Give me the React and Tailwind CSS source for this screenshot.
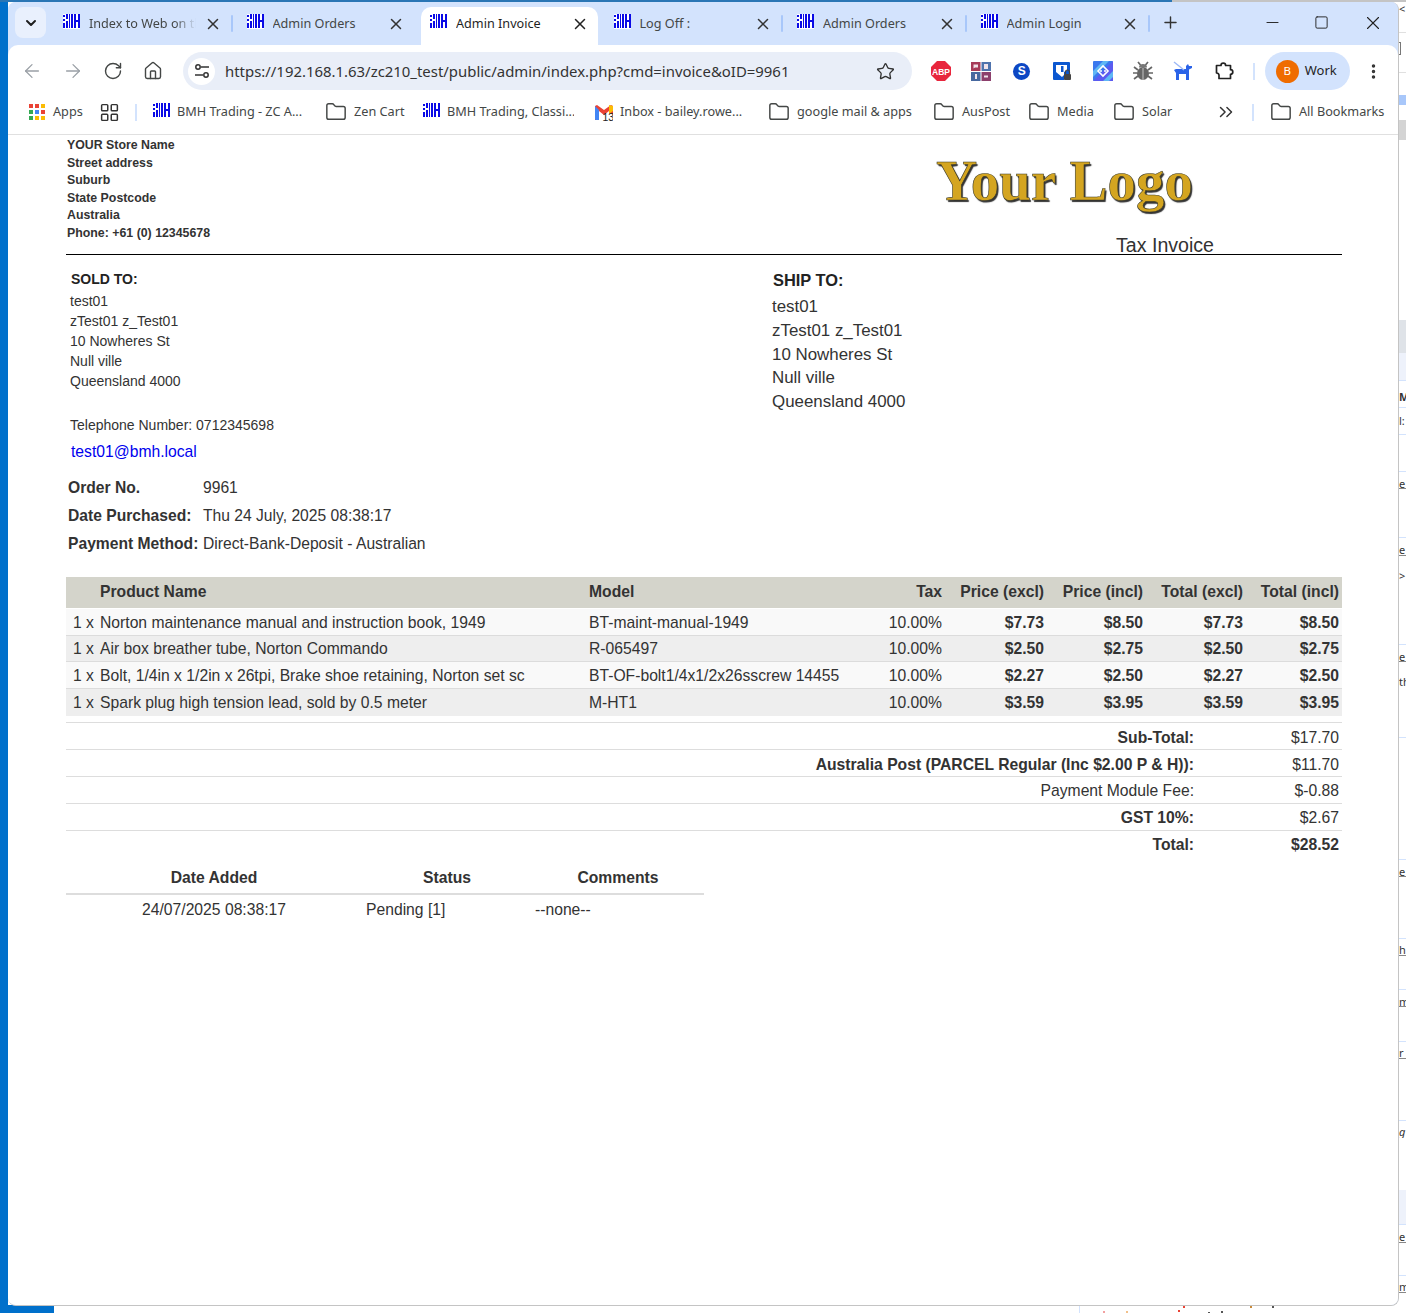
import React from "react";
import { ArrowLeft, ArrowRight, RotateCw, Home, Star, MoreVertical, ChevronDown, ChevronsRight, X, Plus, Minus, Square, Folder, LayoutGrid } from "lucide-react";

const ui = "font-['Noto_Sans','Open_Sans',sans-serif]";

// the barcode-ish favicon used on all the BMH tabs
const Favicon = ({ className = "" }) => (
  <svg width="17" height="15" viewBox="0 0 17 15" className={className}>
    <rect width="17" height="15" fill="#fff" />
    <path d="M0 1h2v2H0zM0 5h2v2H0zM0 9h2v5H0zM3 0h2v5H3zM3 7h2v7H3zM6 0h1v14H6zM8 0h2v14H8zM11 0h2v14h-2zM15 0h2v14h-2z" fill="#0a0ae6" />
    <path d="M13 6h2v2h-2z" fill="#0a0ae6" />
  </svg>
);

const Tab = ({ title, fade, sep = true }) => (
  <div className="relative flex items-center w-[183.5px] h-[38px] pl-[14px] pr-[11px] pb-[5px] shrink-0 text-[#444746]">
    <Favicon className="shrink-0 -mt-[5px]" />
    <span
      className={`ml-[9px] flex-1 text-[12.65px] whitespace-nowrap overflow-hidden ${
        fade ? "mr-[8px] [mask-image:linear-gradient(to_right,#000_80%,transparent)]" : ""
      }`}
    >
      {title}
    </span>
    <X size={18} strokeWidth={2} className="shrink-0 text-[#333]" />
    {sep && <div className="absolute right-0 top-[8px] w-[2px] h-[17px] rounded-sm bg-[#a8c7fa]" />}
  </div>
);

const ActiveTab = ({ title }) => (
  <div className="flex items-center w-[177.5px] h-[38px] ml-[4.5px] mr-[1.5px] pl-[9.5px] pr-[9.5px] pb-[5px] shrink-0 bg-white rounded-t-[10px] text-[#1f1f1f]">
    <Favicon className="shrink-0 -mt-[5px]" />
    <span className="ml-[9px] flex-1 text-[12.65px] whitespace-nowrap overflow-hidden">{title}</span>
    <X size={18} strokeWidth={2} className="shrink-0 text-[#222]" />
  </div>
);

const TabStrip = () => (
  <div className="h-[43px] bg-[#d3e3fd] flex items-end pl-[7px] shrink-0">
    <div className="w-[31px] h-[31px] mb-[7px] rounded-[8px] bg-[#e9f0fd] flex items-center justify-center shrink-0">
      <ChevronDown size={16} strokeWidth={3} className="text-[#1f1f1f]" />
    </div>
    <div className="flex items-center ml-[3px]">
      <Tab title="Index to Web on the" fade />
      <Tab title="Admin Orders" sep={false} />
      <ActiveTab title="Admin Invoice" />
      <Tab title="Log Off :" />
      <Tab title="Admin Orders" />
      <Tab title="Admin Login" />
      <Plus size={19} strokeWidth={1.8} className="ml-[10.5px] -mt-[7px] text-[#333]" />
    </div>
    <div className="flex items-center ml-auto h-full pb-[2px]">
      <div className="w-[44px] flex justify-center"><Minus size={19} strokeWidth={1.2} className="text-[#222]" /></div>
      <div className="w-[54px] flex justify-center"><Square size={15} strokeWidth={1.5} className="text-[#222]" /></div>
      <div className="w-[50px] flex justify-center"><X size={22} strokeWidth={1.2} className="text-[#222]" /></div>
    </div>
  </div>
);

const Abp = () => (
  <svg width="20" height="20" viewBox="0 0 20 20">
    <polygon points="6,0 14,0 20,6 20,14 14,20 6,20 0,14 0,6" fill="#e8263d" />
    <text x="10" y="13.5" textAnchor="middle" fontSize="8.5" fontWeight="700" fill="#fff" fontFamily="Liberation Sans">ABP</text>
  </svg>
);

const GridExt = () => (
  <svg width="20" height="20" viewBox="0 0 20 20">
    <rect x="0" y="1" width="9.5" height="9" fill="#a63a57" />
    <rect x="10.5" y="1" width="9.5" height="9" fill="#4f73ad" />
    <rect x="0" y="11" width="9.5" height="9" fill="#47689f" />
    <rect x="10.5" y="11" width="9.5" height="9" fill="#8c3f6c" />
    <path d="M2.5 3.5h4.5v3H4l-1.5 1zM13 3h4v5h-4zM4 13h2v5H4zM13 14.5h4v2h-4z" fill="#f0e3ea" />
  </svg>
);

const SExt = () => (
  <div className="w-[17px] h-[17px] mx-[1.5px] rounded-full bg-[#0d47c4] flex items-center justify-center text-white text-[12px] font-bold leading-none font-['Liberation_Sans',sans-serif]">S</div>
);

const Shield = () => (
  <svg width="20" height="20" viewBox="0 0 20 20">
    <path d="M1 2a1 1 0 0 1 1-1h15a1 1 0 0 1 1 1v11l-6 6H2a1 1 0 0 1-1-1z" fill="#0b57d0" />
    <path d="M4 4h11v5l-3 2v3l-2 2-6-5z" fill="#fff" />
    <rect x="9" y="5" width="2.5" height="6" fill="#0b57d0" />
    <rect x="12" y="13" width="7" height="6" rx="1" fill="#444" />
    <path d="M13.5 13v-2a2 2 0 0 1 4 0v2" fill="none" stroke="#444" strokeWidth="1.2" />
  </svg>
);

const Diamond = () => (
  <svg width="20" height="20" viewBox="0 0 20 20">
    <rect width="20" height="20" rx="1" fill="#3b78ee" />
    <path d="M0 20 20 0v20z" fill="#5b5bf0" />
    <path d="M0 10 10 0h6L0 16zM10 20 20 10v6l-4 4z" fill="#5fb7f5" />
    <path d="M5 10l5-5 5 5-5 5z" fill="none" stroke="#fff" strokeWidth="1.6" />
    <circle cx="8" cy="10" r="1" fill="#fff" />
    <circle cx="12" cy="10" r="1" fill="#fff" />
  </svg>
);

const BugExt = () => (
  <svg width="20" height="20" viewBox="0 0 20 20">
    <ellipse cx="10" cy="12.5" rx="6" ry="6.5" fill="#666" />
    <path d="M6 6.5a4 3.5 0 0 1 8 0z" fill="#777" />
    <path d="M5 1l2.5 3M15 1l-2.5 3M1 6l4 3M19 6l-4 3M0 12h4.5M20 12h-4.5M1 18l4-3M19 18l-4-3" stroke="#666" strokeWidth="1.7" />
    <path d="M10 7v12" stroke="#ddd" strokeWidth=".8" />
  </svg>
);

const Dog = () => (
  <svg width="20" height="20" viewBox="0 0 20 20">
    <path d="M3 8h10V5l2-2 1 2h3v2l-3 1.5V19h-3v-6H6v6H3v-7L1 9z" fill="#2b63e8" />
    <path d="M1 1l10 8" stroke="#9db8f5" strokeWidth="1.5" />
  </svg>
);

const ExtPuzzle = () => (
  <svg width="20" height="20" viewBox="0 0 20 20" fill="none" stroke="#222" strokeWidth="1.7" strokeLinejoin="round">
    <path d="M2.5 4.5H7a2.3 2.3 0 0 1 4.6 0h4.9v4.2a2.3 2.3 0 0 1 0 4.6v4.2H5v-3.2a2.3 2.3 0 0 0-2.5-2.3z" />
  </svg>
);

const Tune = () => (
  <svg width="18" height="18" viewBox="0 0 18 18" fill="none" stroke="#333" strokeWidth="1.5">
    <circle cx="5" cy="5" r="2.2" />
    <path d="M8 5h8M2 13h8" />
    <circle cx="13" cy="13" r="2.2" />
  </svg>
);

const Toolbar = () => (
  <div className="h-[46px] pt-[6px] flex items-center shrink-0 bg-white rounded-t-[10px]">
    <div className="flex items-center pl-[13px] text-[#9aa0a6]">
      <ArrowLeft size={22} strokeWidth={1.4} />
      <ArrowRight size={22} strokeWidth={1.4} className="ml-[19px]" />
      <RotateCw size={20} strokeWidth={1.7} className="ml-[19px] text-[#444746]" />
      <Home size={20} strokeWidth={1.7} className="ml-[20px] text-[#444746]" />
    </div>
    <div className="ml-[20px] w-[729px] h-[38px] rounded-full bg-[#e9eef8] flex items-center pl-[5px] pr-[17.5px] shrink-0">
      <div className="w-[27px] h-[27px] rounded-full bg-white flex items-center justify-center">
        <Tune />
      </div>
      <span className={`ml-[10px] flex-1 text-[14.92px] text-[#333] whitespace-nowrap ${ui}`}>https://192.168.1.63/zc210_test/public/admin/index.php?cmd=invoice&amp;oID=9961</span>
      <Star size={19} strokeWidth={1.7} className="text-[#333]" />
    </div>
    <div className="ml-[19px] flex items-center gap-[20.4px]">
      <Abp />
      <GridExt />
      <SExt />
      <Shield />
      <Diamond />
      <BugExt />
      <Dog />
      <ExtPuzzle />
    </div>
    <div className="ml-[19px] w-[2px] h-[17px] bg-[#d3e3fd]" />
    <div className="ml-[10px] w-[85px] h-[38px] rounded-full bg-[#d3e3fd] flex items-center pl-[11px] shrink-0">
      <div className={`w-[23px] h-[23px] rounded-full bg-[#ef6c00] text-white text-[11.5px] flex items-center justify-center ${ui}`}>B</div>
      <span className={`ml-[6px] text-[13px] text-[#1f1f1f] ${ui}`}>Work</span>
    </div>
    <MoreVertical size={19} strokeWidth={2.4} className="ml-[14.5px] text-[#333] shrink-0" />
  </div>
);

const BookmarkFolder = ({ label, labelClass = "", className = "" }) => (
  <div className={`flex items-center shrink-0 ${className}`}>
    <Folder size={22} strokeWidth={1.6} className="text-[#444746]" />
    <span className={`ml-[7px] ${labelClass}`}>{label}</span>
  </div>
);

const Bookmarks = () => (
  <div className={`h-[44px] pb-[1px] border-b border-[#e0e0e0] flex items-center pl-[21px] shrink-0 bg-white text-[12.7px] text-[#444746] whitespace-nowrap ${ui}`}>
    <svg width="16" height="16" viewBox="0 0 16 16" className="shrink-0">
      <path d="M0 0h4v4H0z" fill="#ea4335" /><path d="M6 0h4v4H6z" fill="#ea4335" /><path d="M12 0h4v4h-4z" fill="#fbbc04" />
      <path d="M0 6h4v4H0z" fill="#34a853" /><path d="M6 6h4v4H6z" fill="#4285f4" /><path d="M12 6h4v4h-4z" fill="#ea4335" />
      <path d="M0 12h4v4H0z" fill="#34a853" /><path d="M6 12h4v4H6z" fill="#fbbc04" /><path d="M12 12h4v4h-4z" fill="#fbbc04" />
    </svg>
    <span className="ml-[8px] w-[30px]">Apps</span>
    <LayoutGrid size={21} strokeWidth={1.7} className="ml-[16.4px] text-[#333] shrink-0" />
    <div className="ml-[14.6px] w-[2px] h-[17px] bg-[#d3e3fd] shrink-0" />
    <Favicon className="ml-[16px] shrink-0 -mt-[4px]" />
    <span className="ml-[7px] w-[128px]">BMH Trading - ZC A...</span>
    <BookmarkFolder label="Zen Cart" labelClass="w-[51px]" className="ml-[20px]" />
    <Favicon className="ml-[18px] shrink-0 -mt-[4px]" />
    <span className="ml-[7px] w-[127px] overflow-hidden">BMH Trading, Classi...</span>
    <svg width="18" height="18" viewBox="0 0 18 18" className="ml-[21px] shrink-0">
      <path d="M0 3v14h4V8l5 4 5-4v3h4V3l-2-1-7 5-7-5z" fill="#ea4335" />
      <path d="M0 3l4 4v10H1a1 1 0 0 1-1-1z" fill="#4285f4" />
      <path d="M14 2l4 1v5l-4 3z" fill="#fbbc04" />
      <text x="7.5" y="17.5" fontSize="10.5" fill="#222" fontFamily="Liberation Sans">13</text>
    </svg>
    <span className="ml-[7px] w-[122px]">Inbox - bailey.rowe...</span>
    <BookmarkFolder label="google mail &amp; apps" labelClass="w-[117px]" className="ml-[26px]" />
    <BookmarkFolder label="AusPost" labelClass="w-[48px]" className="ml-[19px]" />
    <BookmarkFolder label="Media" labelClass="w-[36px]" className="ml-[18px]" />
    <BookmarkFolder label="Solar" labelClass="w-[31px]" className="ml-[20px]" />
    <ChevronsRight size={22} strokeWidth={1.6} className="ml-[42px] text-[#333] shrink-0" />
    <div className="ml-[15px] w-[2px] h-[17px] bg-[#d3e3fd] shrink-0" />
    <BookmarkFolder label="All Bookmarks" className="ml-[16px]" />
  </div>
);

const products = [
  ["Norton maintenance manual and instruction book, 1949", "BT-maint-manual-1949", "10.00%", "$7.73", "$8.50", "$7.73", "$8.50"],
  ["Air box breather tube, Norton Commando", "R-065497", "10.00%", "$2.50", "$2.75", "$2.50", "$2.75"],
  ["Bolt, 1/4in x 1/2in x 26tpi, Brake shoe retaining, Norton set sc", "BT-OF-bolt1/4x1/2x26sscrew 14455", "10.00%", "$2.27", "$2.50", "$2.27", "$2.50"],
  ["Spark plug high tension lead, sold by 0.5 meter", "M-HT1", "10.00%", "$3.59", "$3.95", "$3.59", "$3.95"],
];

const totals = [
  ["Sub-Total:", "$17.70", true, false],
  ["Australia Post (PARCEL Regular (Inc $2.00 P & H)):", "$11.70", true, false],
  ["Payment Module Fee:", "$-0.88", false, false],
  ["GST 10%:", "$2.67", true, false],
  ["Total:", "$28.52", true, true],
];

const Address = () => (
  <div className="flex">
    <div className="w-[706px] pl-[4px]">
      <div className="text-[14px] font-bold h-[20px] leading-[20px] pl-[1px] mt-[14px] text-[#222]">SOLD TO:</div>
      <div className="text-[14px] leading-[20px] mt-[2px]">
        <div>test01</div>
        <div>zTest01 z_Test01</div>
        <div>10 Nowheres St</div>
        <div>Null ville</div>
        <div>Queensland 4000</div>
      </div>
      <div className="text-[14px] leading-[20px] mt-[24px]">Telephone Number: 0712345698</div>
      <div className="text-[15.7px] leading-[20px] mt-[7px] pl-[1px] text-[#0000ee]">test01@bmh.local</div>
    </div>
    <div>
      <div className="text-[16.4px] font-bold leading-[24px] pl-[1px] mt-[13px] text-[#222]">SHIP TO:</div>
      <div className="text-[16.9px] leading-[23.8px] mt-[3px]">
        <div>test01</div>
        <div>zTest01 z_Test01</div>
        <div>10 Nowheres St</div>
        <div>Null ville</div>
        <div>Queensland 4000</div>
      </div>
    </div>
  </div>
);

const ProductTable = () => (
  <div className="mt-[19px] text-[15.7px] leading-[20px]">
    <div className="flex h-[31px] pb-[1px] items-center bg-[#d4d4cb] font-bold text-[#333] pr-[3px]">
      <span className="w-[34px] shrink-0" />
      <span className="w-[489px] shrink-0">Product Name</span>
      <span className="w-[270px] shrink-0">Model</span>
      <span className="w-[83px] text-right shrink-0">Tax</span>
      <span className="w-[102px] text-right shrink-0">Price (excl)</span>
      <span className="w-[99px] text-right shrink-0">Price (incl)</span>
      <span className="w-[100px] text-right shrink-0">Total (excl)</span>
      <span className="w-[96px] text-right shrink-0">Total (incl)</span>
    </div>
    <div className="mt-[1px]">
      {products.map((p, i) => (
        <div
          key={p[1]}
          className={`flex h-[26.67px] pt-[1.5px] items-center pr-[3px] border-b border-[#dcdcdc] last:border-b-0 ${i % 2 ? "bg-[#eeeeee]" : "bg-[#f9f9f9]"}`}
        >
          <span className="w-[34px] shrink-0 pl-[7px]">1 x</span>
          <span className="w-[489px] shrink-0 whitespace-nowrap">{p[0]}</span>
          <span className="w-[270px] shrink-0 whitespace-nowrap">{p[1]}</span>
          <span className="w-[83px] text-right shrink-0">{p[2]}</span>
          <span className="w-[102px] text-right shrink-0 font-bold">{p[3]}</span>
          <span className="w-[99px] text-right shrink-0 font-bold">{p[4]}</span>
          <span className="w-[100px] text-right shrink-0 font-bold">{p[5]}</span>
          <span className="w-[96px] text-right shrink-0 font-bold">{p[6]}</span>
        </div>
      ))}
    </div>
  </div>
);

const Totals = () => (
  <div className="mt-[6px] text-[15.7px] leading-[20px]">
    {totals.map(([label, value, bold, boldValue], i) => (
      <div key={label} className={`flex h-[27px] items-center border-t border-[#dddddd] pr-[3px] ${i < 2 ? "pt-[5px]" : "pt-[3px]"}`}>
        <span className={`w-[1128px] text-right shrink-0 ${bold ? "font-bold" : ""}`}>{label}</span>
        <span className={`flex-1 text-right ${boldValue ? "font-bold" : ""}`}>{value}</span>
      </div>
    ))}
  </div>
);

const StatusHistory = () => (
  <div className="w-[638px] mt-[10px] text-[15.7px] leading-[20px]">
    <div className="flex h-[28px] pb-[3px] items-center border-b-2 border-[#dddddd] font-bold text-[#333]">
      <span className="w-[296px] text-center shrink-0">Date Added</span>
      <span className="w-[170px] text-center shrink-0">Status</span>
      <span className="flex-1 text-center">Comments</span>
    </div>
    <div className="flex h-[30px] items-center">
      <span className="w-[296px] text-center shrink-0">24/07/2025 08:38:17</span>
      <span className="w-[173px] pl-[4px] shrink-0">Pending [1]</span>
      <span className="flex-1">--none--</span>
    </div>
  </div>
);

const Invoice = () => (
  <div className="flex-1 bg-white pl-[58px] pr-[56px] font-['Liberation_Sans',Arial,sans-serif] text-[#333] overflow-hidden">
    <div className="flex border-b border-black h-[120px]">
      <div className="w-[870px] pt-[2px] pl-[1px] text-[12.35px] font-bold leading-[17.5px] text-[#333]">
        <div>YOUR Store Name</div>
        <div>Street address</div>
        <div>Suburb</div>
        <div>State Postcode</div>
        <div>Australia</div>
        <div>Phone: +61 (0) 12345678</div>
      </div>
      <div className="flex-1">
        <div className="font-['Liberation_Serif',serif] font-bold text-[57px] leading-[62px] mt-[15px] text-[#d4a520] whitespace-nowrap [-webkit-text-stroke:0.6px_#3a3a2a] [text-shadow:1.5px_1.5px_1px_#333]">Your Logo</div>
        <div className="text-[19.6px] leading-[22px] mt-[22px] ml-[180px] text-[#333]">Tax Invoice</div>
      </div>
    </div>
    <Address />
    <div className="mt-[12px] pl-[2px] text-[15.65px]">
      {[
        ["Order No.", "9961"],
        ["Date Purchased:", "Thu 24 July, 2025 08:38:17"],
        ["Payment Method:", "Direct-Bank-Deposit - Australian"],
      ].map(([k, v]) => (
        <div key={k} className="flex h-[28px] items-center">
          <span className="w-[135px] font-bold shrink-0">{k}</span>
          <span>{v}</span>
        </div>
      ))}
    </div>
    <ProductTable />
    <Totals />
    <StatusHistory />
  </div>
);

// slivers of the window behind, showing on the right edge
const behind = [
  [32, 1, "bg-[#e0e0e0]"], [72, 1, "bg-[#e0e0e0]"], [95, 10, "bg-[#a8c7fa]"], [120, 200, "bg-white"],
  [120, 20, "bg-[#d4d4d4]"],
  [320, 33, "bg-[#dfe3e8]"],
  [353, 27, "bg-[#eef2fb]"],
  [380, 1, "bg-[#d3e3fd]"], [407, 1, "bg-[#d3e3fd]"], [434, 1, "bg-[#d3e3fd]"], [471, 1, "bg-[#d3e3fd]"],
  [488, 1, "bg-[#888]"], [537, 1, "bg-[#d3e3fd]"], [555, 1, "bg-[#888]"], [644, 1, "bg-[#d3e3fd]"],
  [661, 1, "bg-[#888]"], [737, 1, "bg-[#d3e3fd]"], [859, 1, "bg-[#d3e3fd]"], [876, 1, "bg-[#888]"],
  [938, 1, "bg-[#d3e3fd]"], [955, 1, "bg-[#888]"], [989, 1, "bg-[#d3e3fd]"], [1006, 1, "bg-[#888]"],
  [1041, 1, "bg-[#d3e3fd]"], [1058, 1, "bg-[#888]"], [1120, 1, "bg-[#d3e3fd]"],
  [1190, 34, "bg-[#eef2fb]"], [1224, 1, "bg-[#d3e3fd]"], [1242, 1, "bg-[#888]"], [1275, 1, "bg-[#d3e3fd]"], [1292, 1, "bg-[#888]"],
];
const behindText = [
  [2, "<", ""], [390, "M", "font-bold"], [414, "l:", ""], [477, "e", ""], [543, "e", ""], [569, ">", ""], [650, "e", ""], [675, "th", ""],
  [865, "e", ""], [943, "h", ""], [995, "m", ""], [1046, "r", ""], [1125, "g", "italic"], [1230, "e", ""], [1280, "m", ""],
];
// coloured specks of the window behind, under the bottom edge
const specks = [
  [1183, 1306, "bg-[#ea4335]"], [1250, 1306, "bg-[#c98a3a]"], [1272, 1306, "bg-[#555]"],
  [1103, 1311, "bg-[#f2a0a0]"], [1126, 1311, "bg-[#f2c08a]"], [1178, 1310, "bg-[#ea4335]"],
  [1208, 1312, "bg-[#555]"], [1221, 1311, "bg-[#555]"],
];

export default function App() {
  return (
    <div className="relative w-[1406px] h-[1313px] overflow-hidden bg-white">
      {/* desktop behind the browser */}
      <div className="absolute left-0 top-0 w-[8px] h-full bg-[#0070cb]" />
      <div className="absolute left-0 bottom-0 w-[54px] h-[8px] bg-[#0070cb]" />
      <div className="absolute left-0 top-0 w-[1172px] h-[2px] bg-[#2a76b5]" />
      <div className="absolute left-[1172px] top-0 w-[234px] h-[2px] bg-[#c4c4c4]" />
      <div className="absolute left-[1079px] bottom-0 w-[1px] h-[7px] bg-[#d3e3fd]" />
      {behind.map(([y, h, c]) => (
        <div key={y + c} className={`absolute left-[1399px] w-[7px] ${c}`} style={{ top: y, height: h }} />
      ))}
      <div className="absolute left-[1399px] top-[42px] w-[2px] h-[13px] border-y border-r border-[#777]" />
      {behindText.map(([y, t, c]) => (
        <div key={y} className={`absolute left-[1399px] w-[7px] overflow-hidden text-[11px] leading-[13px] text-[#333] ${ui} ${c}`} style={{ top: y }}>{t}</div>
      ))}
      {specks.map(([x, y, c]) => (
        <div key={x} className={`absolute w-[2px] h-[2px] ${c}`} style={{ left: x, top: y }} />
      ))}

      {/* browser window */}
      <div className="absolute left-[8px] top-[2px] w-[1391px] h-[1304px] rounded-t-[8px] rounded-b-[8px] border-r border-b border-[#c4c4c4] overflow-hidden flex flex-col bg-[#d3e3fd]">
        <TabStrip />
        <Toolbar />
        <Bookmarks />
        <Invoice />
      </div>
    </div>
  );
}
